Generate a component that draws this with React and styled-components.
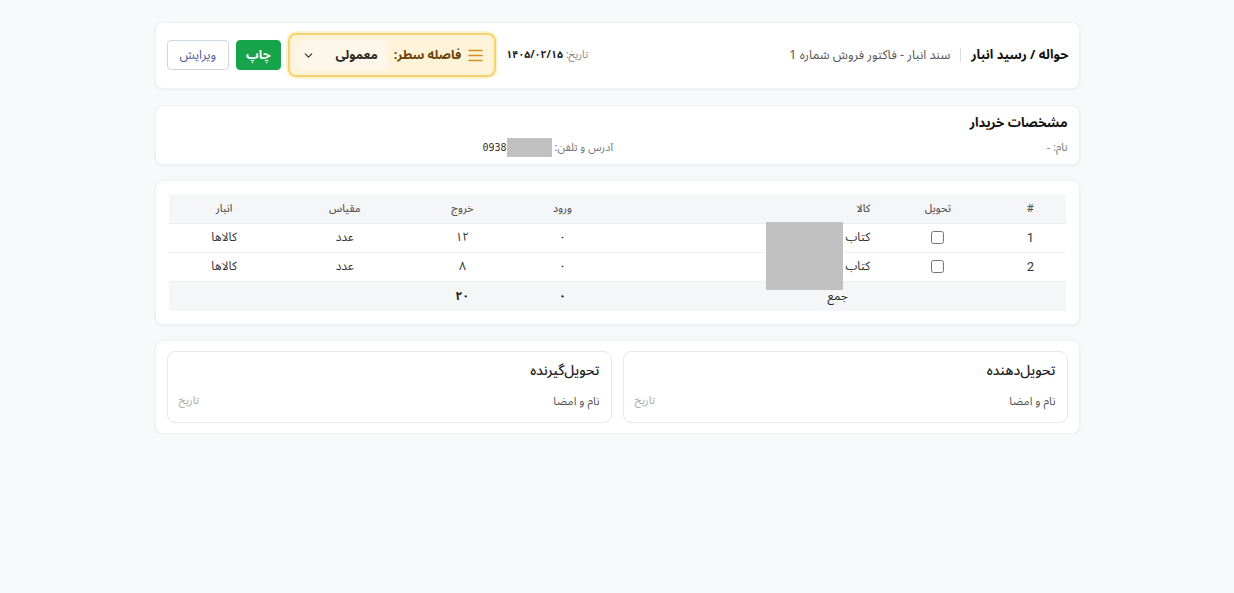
import styled, { createGlobalStyle } from 'styled-components';
import { ChevronDown } from 'lucide-react';

const GlobalStyle = createGlobalStyle`
  html, body {
    margin: 0;
    padding: 0;
    background: #f8f9fb;
  }
  body {
    font-family: "Noto Sans Arabic", "DejaVu Sans", "Noto Sans", sans-serif;
    color: #222;
    line-height: 18px;
  }
`;

const Page = styled.div`
  direction: rtl;
  width: 925px;
  margin: 22px auto 0;
  display: flex;
  flex-direction: column;
  gap: 15px;
`;

const Card = styled.section`
  background: #fff;
  border-radius: 8px;
  box-shadow: 0 1px 3px rgba(15, 23, 42, 0.06);
  border: 1px solid #f0f1f4;
  padding: ${(p) => p.$pad || '10px 11px'};
`;

const HeaderCard = styled(Card)`
  padding: 10px 10px 11px 11px;
  margin-bottom: 1px;
`;

const HeaderRow = styled.div`
  display: flex;
  align-items: center;
  justify-content: space-between;
`;

const TitleGroup = styled.div`
  display: flex;
  align-items: center;
  gap: 10px;
`;

const Title = styled.h1`
  margin: 0;
  font-size: 13px;
  font-weight: 700;
  color: #111;
`;

const Divider = styled.span`
  width: 1px;
  height: 14px;
  background: #d9dce2;
`;

const Subtitle = styled.span`
  font-size: 12.5px;
  color: #555;
`;

const Actions = styled.div`
  display: flex;
  align-items: center;
  gap: 7px;
`;

const DateText = styled.span`
  font-size: 10.5px;
  color: #888;
  margin-left: 3px;

  b {
    color: #222;
    font-weight: 700;
  }
`;

const SpacingBox = styled.div`
  display: flex;
  align-items: center;
  gap: 6px;
  height: 40px;
  padding: 0 11px 0 6px;
  background: #fef3d8;
  border: 2px solid #f3d46e;
  border-radius: 8px;
  box-shadow: 0 0 0 2px rgba(250, 214, 110, 0.3);
`;

const SpacingLabel = styled.span`
  display: flex;
  align-items: center;
  gap: 7px;
  font-size: 12.5px;
  font-weight: 700;
  color: #6b4307;
`;

const Select = styled.div`
  display: flex;
  align-items: center;
  justify-content: space-between;
  width: 92px;
  height: 30px;
  box-sizing: border-box;
  padding: 0 10px 0 6px;
  background: #fdf7ea;
  border-radius: 6px;
  font-size: 12.5px;
  font-weight: 700;
  color: #2f2a22;
`;

const Button = styled.button`
  font-family: inherit;
  font-size: 12.5px;
  height: 30px;
  padding: 0 ${(p) => (p.$primary ? '9px' : '12px')};
  border-radius: 4px;
  cursor: pointer;
  border: 1px solid ${(p) => (p.$primary ? '#16a34a' : '#cfd5e2')};
  background: ${(p) => (p.$primary ? '#16a34a' : '#fff')};
  color: ${(p) => (p.$primary ? '#fff' : '#4b5b9c')};
  font-weight: ${(p) => (p.$primary ? 700 : 400)};
`;

const SectionTitle = styled.h2`
  margin: 0 0 6px;
  font-size: 13px;
  font-weight: 700;
  line-height: 18px;
  color: #111;
`;

const InfoGrid = styled.div`
  display: grid;
  grid-template-columns: 1fr 1fr;
  gap: 8px;
  font-size: 11px;
  color: #777;
  line-height: 18px;
`;

const InfoItem = styled.div`
  display: flex;
  align-items: center;
  gap: 3px;
`;

const Phone = styled.span`
  font-family: "DejaVu Sans Mono", "Liberation Mono", monospace;
  font-size: 10px;
  color: #333;
  direction: ltr;
  display: flex;
  align-items: center;
`;

const Redacted = styled.span`
  display: inline-block;
  background: #c1c1c1;
  width: ${(p) => p.$w}px;
  height: ${(p) => p.$h}px;
`;

const Table = styled.table`
  width: 100%;
  border-collapse: collapse;
  table-layout: fixed;
`;

const Th = styled.th`
  background: #f5f6f8;
  height: 29px;
  padding: 0 10px;
  font-size: 10.5px;
  font-weight: 500;
  color: #555;
  text-align: ${(p) => p.$align || 'center'};
  border-bottom: 1px solid #e9ebef;
`;

const Td = styled.td`
  position: relative;
  height: 28px;
  padding: 0 10px;
  color: #333;
  text-align: ${(p) => p.$align || 'center'};
  border-bottom: 1px solid #eef0f3;
  font-family: ${(p) => (p.$latin ? 'Roboto, "Noto Sans", sans-serif' : 'inherit')};
  font-size: ${(p) => (p.$latin ? '13px' : '12px')};
`;

const FootTd = styled.td`
  background: #f5f6f8;
  height: 29px;
  padding: 0 10px;
  font-size: 12px;
  color: #222;
  text-align: center;
  font-weight: ${(p) => (p.$bold ? 700 : 400)};
`;

const Check = styled.input`
  width: 13px;
  height: 13px;
  margin: 0;
  vertical-align: middle;
`;

const NameCover = styled.span`
  position: absolute;
  top: -2px;
  right: 37px;
  width: 77px;
  height: 68px;
  background: #c1c1c1;
  z-index: 1;
`;

const SignRow = styled.div`
  display: grid;
  grid-template-columns: 1fr 1fr;
  gap: 11px;
`;

const SignBox = styled.div`
  border: 1px solid #e6e8ec;
  border-radius: 8px;
  padding: 10px 11px 12px;
`;

const SignTitle = styled.div`
  font-size: 14px;
  font-weight: 500;
  line-height: 18px;
  color: #222;
  margin-bottom: 12px;
`;

const SignLine = styled.div`
  display: flex;
  justify-content: space-between;
  align-items: center;
  font-size: 11.5px;
  line-height: 18px;
  color: #555;

  small {
    font-size: 11px;
    color: #aaa;
  }
`;

const MenuIcon = () => (
  <svg width="15" height="13" viewBox="0 0 15 13" fill="none" stroke="#d18f1c" strokeWidth="1.6" strokeLinecap="round">
    <line x1="1" y1="1.5" x2="14" y2="1.5" />
    <line x1="1" y1="6.5" x2="14" y2="6.5" />
    <line x1="1" y1="11.5" x2="14" y2="11.5" />
  </svg>
);

const items = [
  { id: 1, name: 'کتاب', inQty: '۰', outQty: '۱۲', unit: 'عدد', store: 'کالاها' },
  { id: 2, name: 'کتاب', inQty: '۰', outQty: '۸', unit: 'عدد', store: 'کالاها' },
];

const widths = [70, 115, 270, 95, 105, 130, 111];

export default function App() {
  return (
    <>
      <GlobalStyle />
      <Page>
        <HeaderCard>
          <HeaderRow>
            <TitleGroup>
              <Title>حواله / رسید انبار</Title>
              <Divider />
              <Subtitle>سند انبار - فاکتور فروش شماره 1</Subtitle>
            </TitleGroup>
            <Actions>
              <DateText>
                تاریخ: <b>۱۴۰۵/۰۲/۱۵</b>
              </DateText>
              <SpacingBox>
                <SpacingLabel>
                  <MenuIcon />
                  فاصله سطر:
                </SpacingLabel>
                <Select>
                  معمولی
                  <ChevronDown size={13} strokeWidth={2.2} color="#333" />
                </Select>
              </SpacingBox>
              <Button $primary>چاپ</Button>
              <Button>ویرایش</Button>
            </Actions>
          </HeaderRow>
        </HeaderCard>

        <Card $pad="8px 11px 7px">
          <SectionTitle>مشخصات خریدار</SectionTitle>
          <InfoGrid>
            <InfoItem>نام: -</InfoItem>
            <InfoItem>
              آدرس و تلفن:
              <Phone>
                0938
                <Redacted $w={45} $h={19} />
              </Phone>
            </InfoItem>
          </InfoGrid>
        </Card>

        <Card $pad="13px">
          <Table>
            <colgroup>
              {widths.map((w, i) => (
                <col key={i} style={{ width: w }} />
              ))}
            </colgroup>
            <thead>
              <tr>
                <Th>#</Th>
                <Th>تحویل</Th>
                <Th $align="right">کالا</Th>
                <Th>ورود</Th>
                <Th>خروج</Th>
                <Th>مقیاس</Th>
                <Th>انبار</Th>
              </tr>
            </thead>
            <tbody>
              {items.map((it, i) => (
                <tr key={it.id}>
                  <Td $latin>{it.id}</Td>
                  <Td>
                    <Check type="checkbox" readOnly />
                  </Td>
                  <Td $align="right">
                    {it.name}
                    {i === 0 && <NameCover />}
                  </Td>
                  <Td>{it.inQty}</Td>
                  <Td>{it.outQty}</Td>
                  <Td>{it.unit}</Td>
                  <Td>{it.store}</Td>
                </tr>
              ))}
            </tbody>
            <tfoot>
              <tr>
                <FootTd colSpan={3}>جمع</FootTd>
                <FootTd $bold>۰</FootTd>
                <FootTd $bold>۲۰</FootTd>
                <FootTd />
                <FootTd />
              </tr>
            </tfoot>
          </Table>
        </Card>

        <Card>
          <SignRow>
            <SignBox>
              <SignTitle>تحویل‌دهنده</SignTitle>
              <SignLine>
                <span>نام و امضا</span>
                <small>تاریخ</small>
              </SignLine>
            </SignBox>
            <SignBox>
              <SignTitle>تحویل‌گیرنده</SignTitle>
              <SignLine>
                <span>نام و امضا</span>
                <small>تاریخ</small>
              </SignLine>
            </SignBox>
          </SignRow>
        </Card>
      </Page>
    </>
  );
}
